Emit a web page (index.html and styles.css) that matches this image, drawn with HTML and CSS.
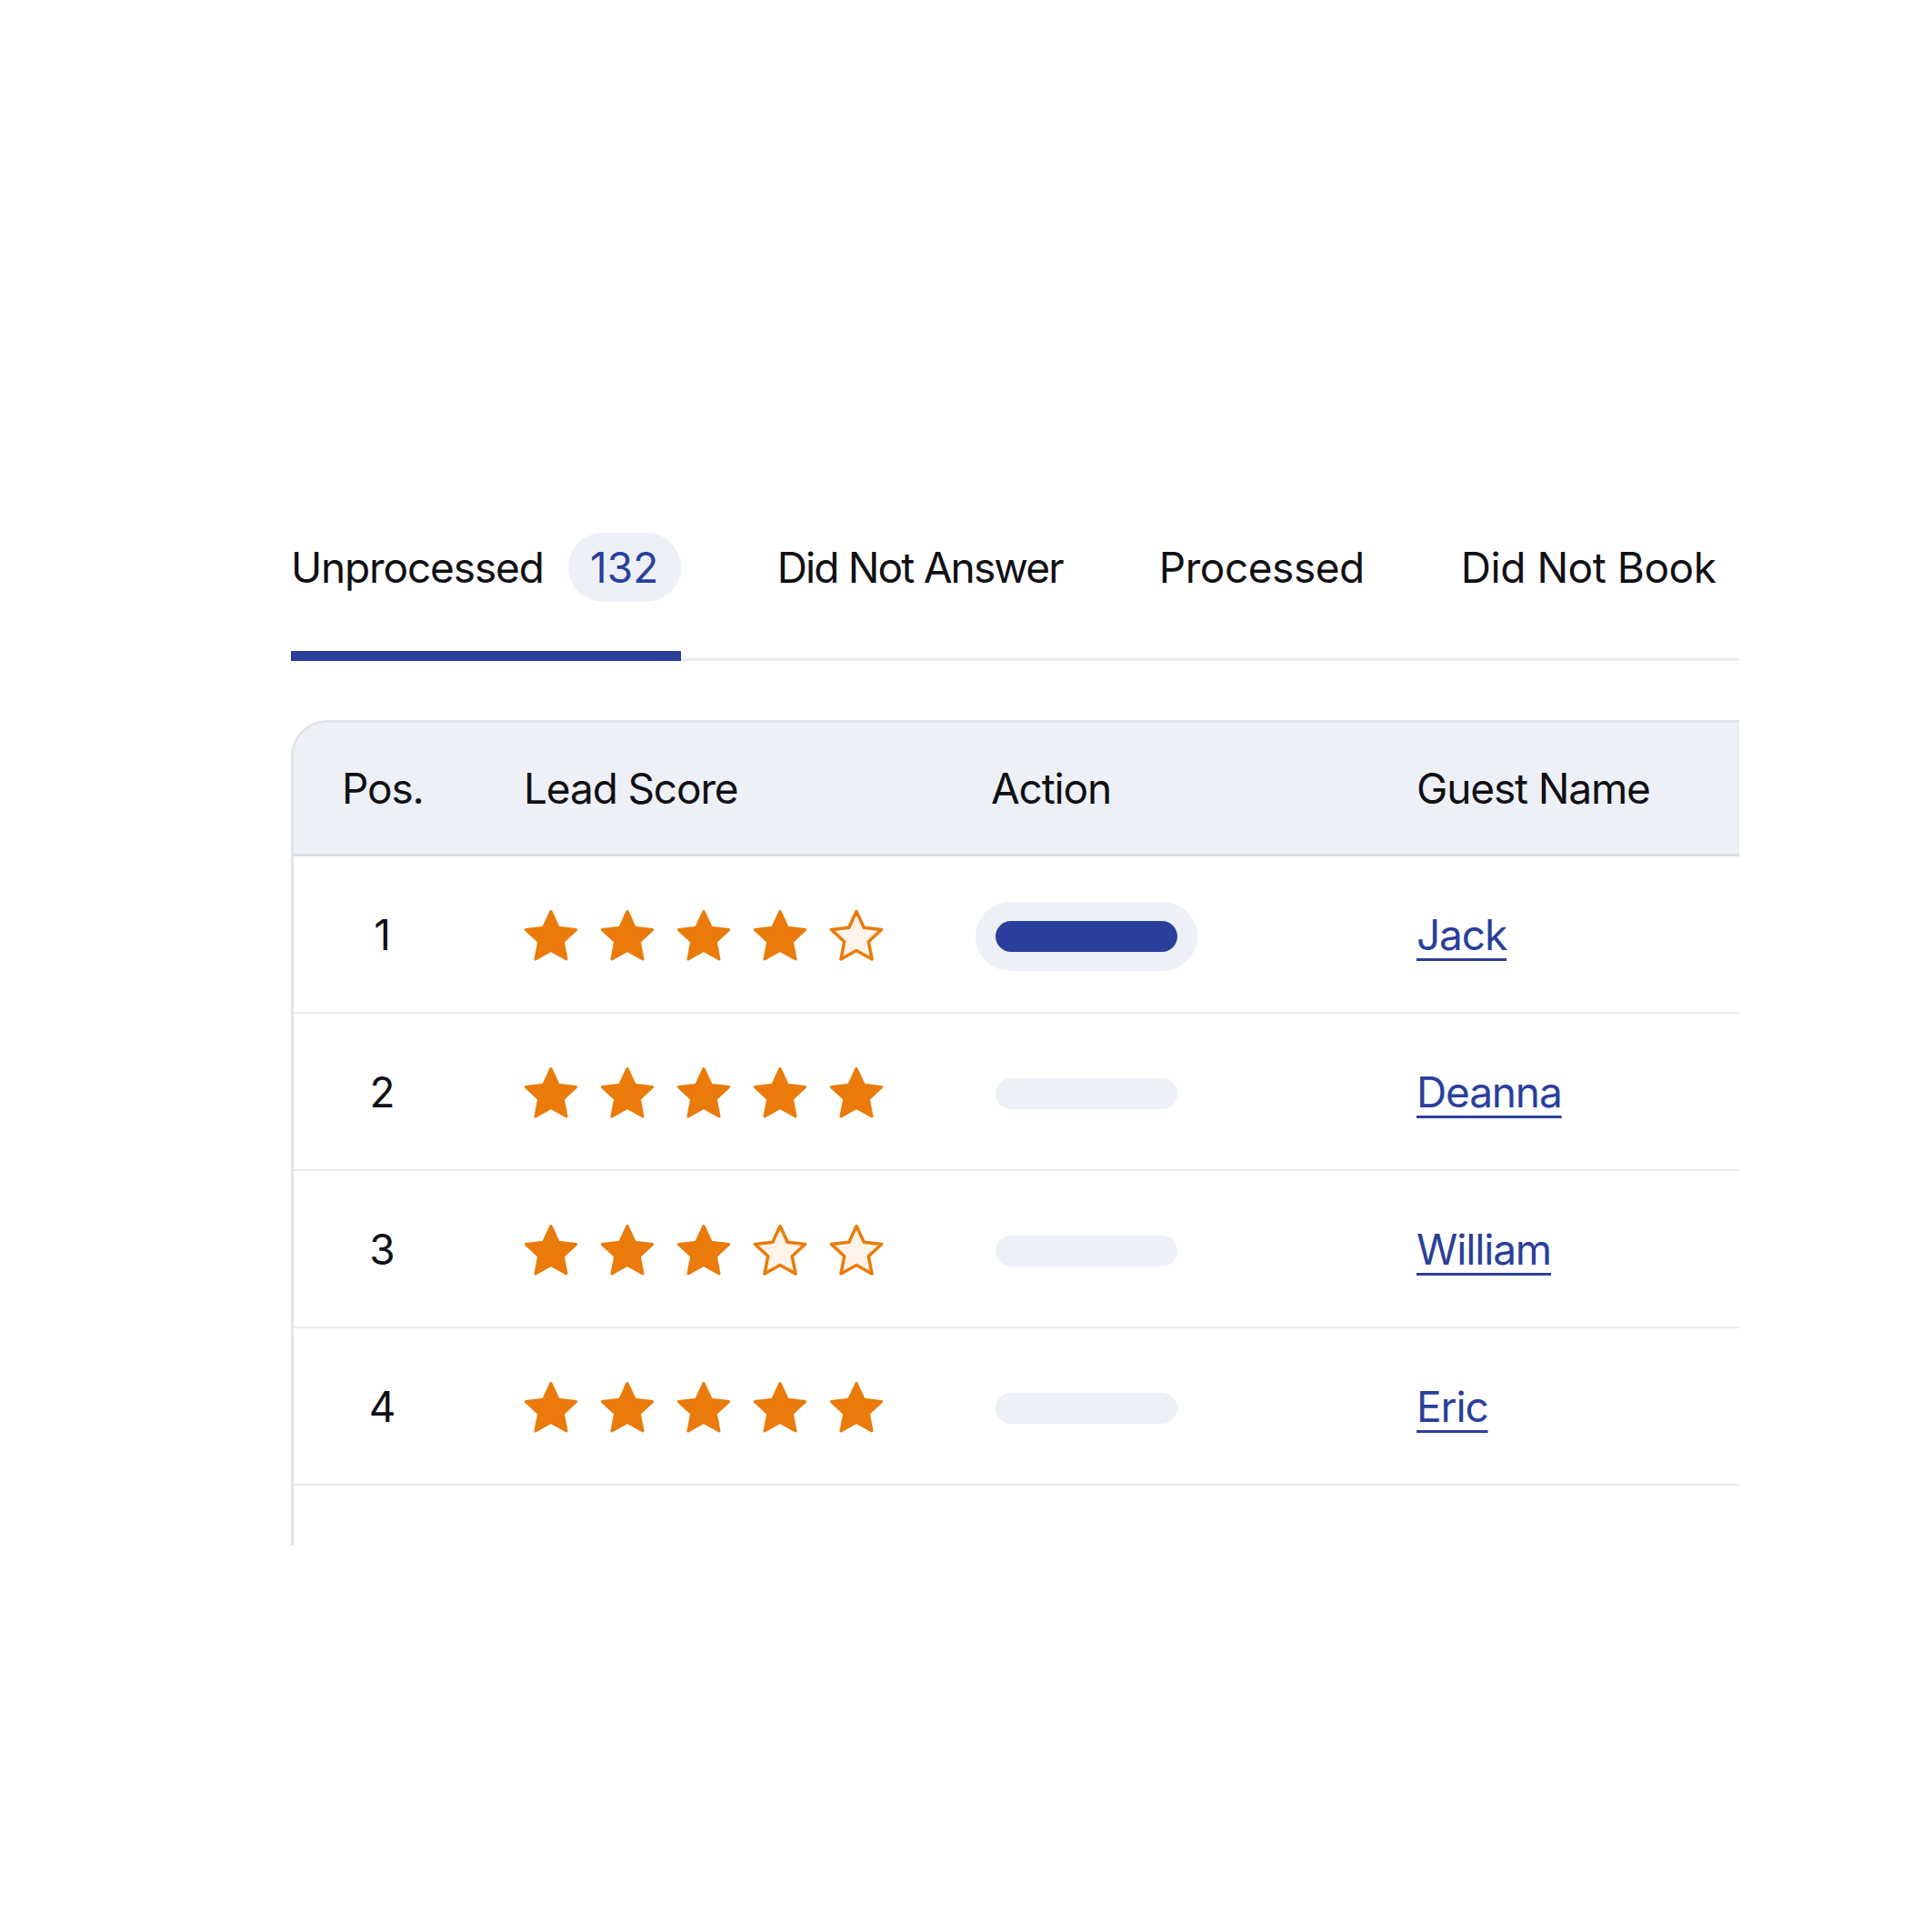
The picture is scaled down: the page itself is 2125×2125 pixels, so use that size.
FILE: index.html
```html
<!DOCTYPE html>
<html lang="en">
<head>
<meta charset="utf-8">
<title>Leads</title>
<link rel="stylesheet" href="styles.css">
</head>
<body>
<main class="page">
  <nav class="tabs">
    <div class="tab tab-active"><span class="tab-label">Unprocessed</span><span class="badge">132</span></div>
    <div class="tab"><span class="tab-label tight">Did Not Answer</span></div>
    <div class="tab"><span class="tab-label loose">Processed</span></div>
    <div class="tab"><span class="tab-label loose">Did Not Book</span></div>
  </nav>

  <section class="table">
    <div class="row head">
      <div class="cell pos">Pos.</div>
      <div class="cell">Lead Score</div>
      <div class="cell">Action</div>
      <div class="cell">Guest Name</div>
    </div>

    <div class="row">
      <div class="cell pos">1</div>
      <div class="cell stars">
        <svg class="star" viewBox="0 0 60 57"><path class="full" d="M30 1.5L38.23 19.17L57.58 21.54L43.31 34.83L47.05 53.96L30 44.5L12.95 53.96L16.69 34.83L2.42 21.54L21.77 19.17Z"/></svg>
        <svg class="star" viewBox="0 0 60 57"><path class="full" d="M30 1.5L38.23 19.17L57.58 21.54L43.31 34.83L47.05 53.96L30 44.5L12.95 53.96L16.69 34.83L2.42 21.54L21.77 19.17Z"/></svg>
        <svg class="star" viewBox="0 0 60 57"><path class="full" d="M30 1.5L38.23 19.17L57.58 21.54L43.31 34.83L47.05 53.96L30 44.5L12.95 53.96L16.69 34.83L2.42 21.54L21.77 19.17Z"/></svg>
        <svg class="star" viewBox="0 0 60 57"><path class="full" d="M30 1.5L38.23 19.17L57.58 21.54L43.31 34.83L47.05 53.96L30 44.5L12.95 53.96L16.69 34.83L2.42 21.54L21.77 19.17Z"/></svg>
        <svg class="star" viewBox="0 0 60 57"><path class="empty" d="M30 1.5L38.23 19.17L57.58 21.54L43.31 34.83L47.05 53.96L30 44.5L12.95 53.96L16.69 34.83L2.42 21.54L21.77 19.17Z"/></svg>
      </div>
      <div class="cell act"><div class="action action-active"><div class="bar"></div></div></div>
      <div class="cell"><a class="guest" href="#">Jack</a></div>
    </div>

    <div class="row">
      <div class="cell pos">2</div>
      <div class="cell stars">
        <svg class="star" viewBox="0 0 60 57"><path class="full" d="M30 1.5L38.23 19.17L57.58 21.54L43.31 34.83L47.05 53.96L30 44.5L12.95 53.96L16.69 34.83L2.42 21.54L21.77 19.17Z"/></svg>
        <svg class="star" viewBox="0 0 60 57"><path class="full" d="M30 1.5L38.23 19.17L57.58 21.54L43.31 34.83L47.05 53.96L30 44.5L12.95 53.96L16.69 34.83L2.42 21.54L21.77 19.17Z"/></svg>
        <svg class="star" viewBox="0 0 60 57"><path class="full" d="M30 1.5L38.23 19.17L57.58 21.54L43.31 34.83L47.05 53.96L30 44.5L12.95 53.96L16.69 34.83L2.42 21.54L21.77 19.17Z"/></svg>
        <svg class="star" viewBox="0 0 60 57"><path class="full" d="M30 1.5L38.23 19.17L57.58 21.54L43.31 34.83L47.05 53.96L30 44.5L12.95 53.96L16.69 34.83L2.42 21.54L21.77 19.17Z"/></svg>
        <svg class="star" viewBox="0 0 60 57"><path class="full" d="M30 1.5L38.23 19.17L57.58 21.54L43.31 34.83L47.05 53.96L30 44.5L12.95 53.96L16.69 34.83L2.42 21.54L21.77 19.17Z"/></svg>
      </div>
      <div class="cell act"><div class="action"><div class="bar bar-light"></div></div></div>
      <div class="cell"><a class="guest" href="#">Deanna</a></div>
    </div>

    <div class="row">
      <div class="cell pos">3</div>
      <div class="cell stars">
        <svg class="star" viewBox="0 0 60 57"><path class="full" d="M30 1.5L38.23 19.17L57.58 21.54L43.31 34.83L47.05 53.96L30 44.5L12.95 53.96L16.69 34.83L2.42 21.54L21.77 19.17Z"/></svg>
        <svg class="star" viewBox="0 0 60 57"><path class="full" d="M30 1.5L38.23 19.17L57.58 21.54L43.31 34.83L47.05 53.96L30 44.5L12.95 53.96L16.69 34.83L2.42 21.54L21.77 19.17Z"/></svg>
        <svg class="star" viewBox="0 0 60 57"><path class="full" d="M30 1.5L38.23 19.17L57.58 21.54L43.31 34.83L47.05 53.96L30 44.5L12.95 53.96L16.69 34.83L2.42 21.54L21.77 19.17Z"/></svg>
        <svg class="star" viewBox="0 0 60 57"><path class="empty" d="M30 1.5L38.23 19.17L57.58 21.54L43.31 34.83L47.05 53.96L30 44.5L12.95 53.96L16.69 34.83L2.42 21.54L21.77 19.17Z"/></svg>
        <svg class="star" viewBox="0 0 60 57"><path class="empty" d="M30 1.5L38.23 19.17L57.58 21.54L43.31 34.83L47.05 53.96L30 44.5L12.95 53.96L16.69 34.83L2.42 21.54L21.77 19.17Z"/></svg>
      </div>
      <div class="cell act"><div class="action"><div class="bar bar-light"></div></div></div>
      <div class="cell"><a class="guest" href="#">William</a></div>
    </div>

    <div class="row">
      <div class="cell pos">4</div>
      <div class="cell stars">
        <svg class="star" viewBox="0 0 60 57"><path class="full" d="M30 1.5L38.23 19.17L57.58 21.54L43.31 34.83L47.05 53.96L30 44.5L12.95 53.96L16.69 34.83L2.42 21.54L21.77 19.17Z"/></svg>
        <svg class="star" viewBox="0 0 60 57"><path class="full" d="M30 1.5L38.23 19.17L57.58 21.54L43.31 34.83L47.05 53.96L30 44.5L12.95 53.96L16.69 34.83L2.42 21.54L21.77 19.17Z"/></svg>
        <svg class="star" viewBox="0 0 60 57"><path class="full" d="M30 1.5L38.23 19.17L57.58 21.54L43.31 34.83L47.05 53.96L30 44.5L12.95 53.96L16.69 34.83L2.42 21.54L21.77 19.17Z"/></svg>
        <svg class="star" viewBox="0 0 60 57"><path class="full" d="M30 1.5L38.23 19.17L57.58 21.54L43.31 34.83L47.05 53.96L30 44.5L12.95 53.96L16.69 34.83L2.42 21.54L21.77 19.17Z"/></svg>
        <svg class="star" viewBox="0 0 60 57"><path class="full" d="M30 1.5L38.23 19.17L57.58 21.54L43.31 34.83L47.05 53.96L30 44.5L12.95 53.96L16.69 34.83L2.42 21.54L21.77 19.17Z"/></svg>
      </div>
      <div class="cell act"><div class="action"><div class="bar bar-light"></div></div></div>
      <div class="cell"><a class="guest" href="#">Eric</a></div>
    </div>
  </section>
</main>
</body>
</html>
```

FILE: styles.css
```css
* { box-sizing: border-box; }

html, body {
  margin: 0;
  padding: 0;
  background: #ffffff;
}

body {
  font-family: Inter, "Noto Sans", sans-serif;
  color: #101014;
}

.page {
  width: 2125px;
  height: 2125px;
  padding: 586px 0 0 320px;
}

/* Tabs */
.tabs {
  display: flex;
  align-items: flex-end;
  gap: 106px;
  width: 1593px;
  border-bottom: 3px solid #ececee;
}

.tab {
  display: flex;
  align-items: center;
  gap: 27px;
  height: 141px;
  padding-bottom: 54px;
  margin-bottom: -3px;
  border-bottom: 11px solid transparent;
  font-size: 46px;
  letter-spacing: -0.025em;
  line-height: 76px;
}

.tab-label.tight {
  letter-spacing: -0.04em;
}

.tab-label.loose {
  letter-spacing: -0.01em;
}

.tab-active {
  border-bottom-color: #2a3f9b;
}

.badge {
  display: inline-flex;
  align-items: center;
  justify-content: center;
  width: 124px;
  height: 76px;
  border-radius: 38px;
  background: #edf0f7;
  color: #2a3f9b;
  letter-spacing: 0;
}

/* Table */
.table {
  margin-top: 65px;
  width: 1593px;
  height: 908px;
  border-top: 3px solid #e2e3ea;
  border-left: 3px solid #e2e3ea;
  border-top-left-radius: 40px;
  overflow: hidden;
}

.row {
  display: grid;
  grid-template-columns: 200px 514px 468px 1fr;
  align-items: center;
  height: 173px;
  padding-left: 53px;
  border-bottom: 2px solid #ebebee;
  font-size: 46px;
  letter-spacing: -0.025em;
}

.row.head {
  height: 147px;
  background: #eef0f7;
  border-bottom: 3px solid #dcdde6;
}

.cell.pos {
  width: 88px;
  text-align: center;
}

.stars {
  display: flex;
  gap: 24px;
  align-items: center;
  padding-top: 4px;
}

.star {
  width: 60px;
  height: 57px;
  display: block;
}

.star .full {
  fill: #ea7b0a;
  stroke: #ea7b0a;
  stroke-width: 3;
  stroke-linejoin: round;
}

.star .empty {
  fill: #fdf3e9;
  stroke: #ea7b0a;
  stroke-width: 3.5;
  stroke-linejoin: round;
}

.cell.act {
  display: flex;
  align-items: center;
  padding-top: 5px;
}

.action {
  display: block;
  margin-left: -17px;
  padding: 21px 22px;
  border-radius: 38px;
}

.action-active {
  background: #edf0f7;
}

.bar {
  width: 200px;
  height: 34px;
  border-radius: 17px;
  background: #2a3f9b;
}

.bar.bar-light {
  background: #edf0f7;
}

.guest {
  color: #2a3f9b;
  text-decoration: underline;
  text-decoration-thickness: 3px;
  text-underline-offset: 9px;
}
```
